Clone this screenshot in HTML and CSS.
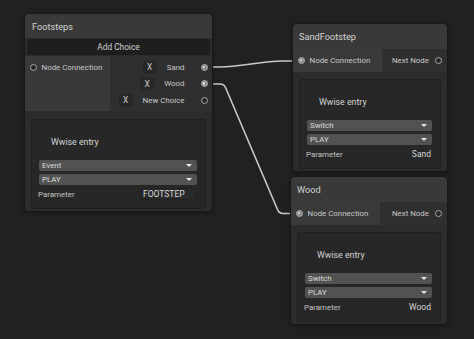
FILE: index.html
```html
<!DOCTYPE html>
<html lang="en">

<head>
    <meta charset="UTF-8" />
    <title>Footsteps Graph</title>
    <link rel="stylesheet" href="styles.css">
</head>

<body>
    <div class="canvas">
        <!-- edges between ports -->
        <svg class="edges" width="474" height="339" viewBox="0 0 474 339">
            <path d="M208,67 L220,67 C240,67 262,61 282,61 L300,61" />
            <path d="M208,84 L220,84 Q224,84 225.5,87.5 L277.5,209.5 Q279,213.5 283,213.5 L298,213.5" />
        </svg>

        <!-- Footsteps -->
        <div class="node node-footsteps">
            <div class="node-title">Footsteps</div>
            <div class="add-choice">Add Choice</div>
            <div class="ports">
                <div class="in-col">
                    <div class="port-row">
                        <span class="port"></span>
                        <span class="port-label">Node Connection</span>
                    </div>
                </div>
                <div class="out-col">
                    <div class="choice-row">
                        <span class="x-btn">X</span>
                        <span class="port-label">Sand</span>
                        <span class="port on"></span>
                    </div>
                    <div class="choice-row">
                        <span class="x-btn">X</span>
                        <span class="port-label">Wood</span>
                        <span class="port on"></span>
                    </div>
                    <div class="choice-row">
                        <span class="x-btn">X</span>
                        <span class="port-label">New Choice</span>
                        <span class="port"></span>
                    </div>
                </div>
            </div>
            <div class="node-body">
                <div class="entry">
                    <div class="entry-title">Wwise entry</div>
                    <div class="dropdown">Event</div>
                    <div class="dropdown">PLAY</div>
                    <div class="param-row">
                        <span class="param-label">Parameter</span>
                        <span class="param-field wide">FOOTSTEP</span>
                    </div>
                </div>
            </div>
        </div>

        <!-- SandFootstep -->
        <div class="node node-sand">
            <div class="node-title">SandFootstep</div>
            <div class="io-row">
                <div class="io-in">
                    <span class="port on"></span>
                    <span class="port-label">Node Connection</span>
                </div>
                <div class="io-out">
                    <span class="port-label">Next Node</span>
                    <span class="port"></span>
                </div>
            </div>
            <div class="node-body">
                <div class="entry">
                    <div class="entry-title">Wwise entry</div>
                    <div class="dropdown">Switch</div>
                    <div class="dropdown">PLAY</div>
                    <div class="param-row">
                        <span class="param-label">Parameter</span>
                        <span class="param-field">Sand</span>
                    </div>
                </div>
            </div>
        </div>

        <!-- Wood -->
        <div class="node node-wood">
            <div class="node-title">Wood</div>
            <div class="io-row">
                <div class="io-in">
                    <span class="port on"></span>
                    <span class="port-label">Node Connection</span>
                </div>
                <div class="io-out">
                    <span class="port-label">Next Node</span>
                    <span class="port"></span>
                </div>
            </div>
            <div class="node-body">
                <div class="entry">
                    <div class="entry-title">Wwise entry</div>
                    <div class="dropdown">Switch</div>
                    <div class="dropdown">PLAY</div>
                    <div class="param-row">
                        <span class="param-label">Parameter</span>
                        <span class="param-field">Wood</span>
                    </div>
                </div>
            </div>
        </div>
    </div>
</body>

</html>
```

FILE: styles.css
```css
* {
    box-sizing: border-box;
}

body {
    margin: 0;
    background: #212121;
    font-family: Roboto, 'Liberation Sans', sans-serif;
    color: #c6c6c6;
}

.canvas {
    position: relative;
    width: 474px;
    height: 339px;
    overflow: hidden;
    background: #212121;
}

.edges {
    position: absolute;
    top: 0;
    left: 0;
}

.edges path {
    fill: none;
    stroke: #c8c8c8;
    stroke-width: 1.6;
}

/* nodes sit on a free canvas */
.node {
    position: absolute;
    display: flex;
    flex-direction: column;
    background: #2c2c2c;
    border: 1px solid #181818;
    border-radius: 5px;
    overflow: hidden;
    box-shadow: 0 1px 4px rgba(0, 0, 0, 0.35);
}

.node-footsteps {
    left: 24px;
    top: 13px;
    width: 189px;
}

.node-sand {
    left: 292px;
    top: 23px;
    width: 156px;
}

.node-wood {
    left: 290px;
    top: 176px;
    width: 158px;
}

.node-title {
    height: 24px;
    display: flex;
    align-items: center;
    padding-left: 7px;
    background: #393939;
    font-size: 9.2px;
    color: #d2d2d2;
}

.node-sand .node-title,
.node-wood .node-title {
    height: 25px;
    padding-left: 6px;
}

.add-choice {
    height: 16px;
    margin: 1px 2px 1px;
    display: flex;
    align-items: center;
    justify-content: center;
    background: #1e1e1e;
    border-radius: 2px;
    font-size: 8.3px;
    color: #d0d0d0;
}

.ports {
    display: flex;
    height: 55px;
}

.in-col {
    width: 85px;
    background: #393939;
    padding-top: 3px;
}

.out-col {
    flex: 1;
    background: #2f2f2f;
    padding: 3px 4px 0 0;
}

.port-row,
.choice-row {
    height: 16.5px;
    display: flex;
    align-items: center;
}

.port-row {
    padding-left: 4.5px;
}

.choice-row {
    justify-content: flex-end;
}

.port-label {
    font-size: 7.9px;
    color: #c8c8c8;
    white-space: nowrap;
}

.port {
    position: relative;
    width: 7px;
    height: 7px;
    flex: none;
    border: 1.2px solid #a9a9a9;
    border-radius: 50%;
    background: #262626;
}

.port.on {
    background: #8c8c8c;
}

.port.on::after {
    content: '';
    position: absolute;
    top: 1.1px;
    left: 1.1px;
    width: 2.4px;
    height: 2.4px;
    border-radius: 50%;
    background: #e2e2e2;
}

.port-row .port {
    margin-right: 5px;
}

.choice-row .port {
    margin-left: 16.5px;
}

.x-btn {
    width: 14px;
    height: 13px;
    margin-right: 10px;
    display: flex;
    align-items: center;
    justify-content: center;
    background: #272727;
    border-radius: 2px;
    font-size: 8.4px;
    color: #cccccc;
}

/* single input/output row of the leaf nodes */
.io-row {
    display: flex;
    height: 23px;
}

.io-in {
    width: 89px;
    display: flex;
    align-items: center;
    gap: 5px;
    padding-left: 4.5px;
    background: #3a3a3a;
}

.io-out {
    flex: 1;
    display: flex;
    align-items: center;
    justify-content: flex-end;
    gap: 6px;
    padding-right: 5px;
    background: #2f2f2f;
}

.node-body {
    padding: 7px 6px 2px 6px;
    background: #2c2c2c;
}

.node-footsteps .node-body {
    padding-top: 8px;
}

.entry {
    padding: 0 8px 8px 7px;
    background: #272727;
    border: 1px solid #1f1f1f;
    border-radius: 3px;
}

.entry-title {
    margin: 16px 0 12px 12px;
    height: 12px;
    line-height: 12px;
    font-size: 8.8px;
    color: #d4d4d4;
}

.dropdown {
    position: relative;
    height: 11px;
    margin-bottom: 3px;
    padding-left: 3px;
    line-height: 11px;
    background: #525252;
    border-radius: 2px;
    font-size: 7.9px;
    color: #dadada;
}

.dropdown::after {
    content: '';
    position: absolute;
    right: 5px;
    top: 4px;
    border-left: 3px solid transparent;
    border-right: 3px solid transparent;
    border-top: 3px solid #e6e6e6;
}

.param-row {
    display: flex;
    align-items: center;
    justify-content: space-between;
    height: 12px;
}

.param-label {
    margin-left: -1px;
    font-size: 7.9px;
    color: #c6c6c6;
}

.param-field {
    height: 12px;
    line-height: 12px;
    padding: 0 1px;
    font-size: 8.5px;
    color: #d6d6d6;
}

.param-field.wide {
    width: 56px;
    padding-left: 1px;
    background: #2a2a2a;
    border: 1px solid #212121;
    line-height: 10px;
}
```
